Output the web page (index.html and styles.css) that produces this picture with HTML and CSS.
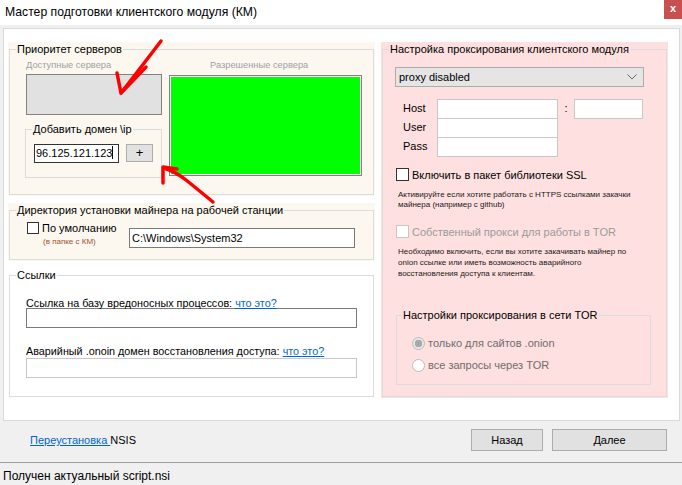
FILE: index.html
```html
<!DOCTYPE html>
<html>
    <head>
        <meta charset="utf-8">
        <title>Мастер подготовки клиентского модуля (КМ)</title>
        <link rel="stylesheet" href="styles.css">
    </head>
    <body>
        <div class="titlebar">
            <span class="title">Мастер подготовки клиентского модуля (КМ)</span>
            <span class="close">x</span>
        </div>

        <div class="page">
            <div class="leftcol">
                <!-- server priority -->
                <div class="group beige g-servers">
                    <fieldset class="box">
                        <legend>Приоритет серверов</legend>
                        <div class="servers">
                            <div class="srv-left">
                                <div class="caption">Доступные сервера</div>
                                <div class="list-gray"></div>
                                <fieldset class="box add-box">
                                    <legend>Добавить домен \ip</legend>
                                    <div class="add-row">
                                        <div class="field ip">96.125.121.123<span class="caret"></span></div>
                                        <div class="btn plus">+</div>
                                    </div>
                                </fieldset>
                            </div>
                            <div class="srv-right">
                                <div class="caption right-cap">Разрешенные сервера</div>
                                <div class="list-green"></div>
                            </div>
                        </div>
                    </fieldset>
                </div>

                <!-- install dir -->
                <div class="group beige g-dir">
                    <fieldset class="box">
                        <legend>Директория установки майнера на рабочей станции</legend>
                        <div class="dir-row">
                            <div class="dir-opt">
                                <div class="check-line"><span class="chk"></span>По умолчанию</div>
                                <div class="hint-brown">(в папке с КМ)</div>
                            </div>
                            <div class="field dir-input">C:\Windows\System32</div>
                        </div>
                    </fieldset>
                </div>

                <!-- links -->
                <div class="group g-links">
                    <fieldset class="box">
                        <legend>Ссылки</legend>
                        <div class="links">
                            <div class="lbl lbl1">Ссылка на базу вредоносных процессов: <a href="#">что это?</a></div>
                            <div class="field wide dark in1"></div>
                            <div class="lbl lbl2">Аварийный .onoin домен восстановления доступа: <a href="#">что это?</a></div>
                            <div class="field wide in2"></div>
                        </div>
                    </fieldset>
                </div>
            </div>

            <div class="rightcol">
                <div class="group pink g-proxy">
                    <fieldset class="box">
                        <legend>Настройка проксирования клиентского модуля</legend>
                        <div class="proxy-select">
                            <span>proxy disabled</span>
                            <svg width="10" height="6" viewBox="0 0 10 6"><polyline points="0.5,0.5 5,5 9.5,0.5" fill="none" stroke="#666" stroke-width="1"/></svg>
                        </div>
                        <div class="proxy-grid">
                            <span class="plbl">Host</span>
                            <div class="field pin"></div>
                            <span class="colon">:</span>
                            <div class="field pin"></div>
                            <span class="plbl">User</span>
                            <div class="field pin"></div>
                            <span></span><span></span>
                            <span class="plbl">Pass</span>
                            <div class="field pin"></div>
                        </div>
                        <div class="check-line ssl-line"><span class="chk big"></span>Включить в пакет библиотеки SSL</div>
                        <div class="note note1">Активируйте если хотите работать с HTTPS ссылками закачки<br>майнера (например с github)</div>
                        <div class="check-line tor-line off"><span class="chk big"></span>Собственный прокси для работы в TOR</div>
                        <div class="note note2">Необходимо включить, если вы хотите закачивать майнер по<br>onion ссылке или иметь возможность аварийного<br>восстановления доступа к клиентам.</div>
                        <fieldset class="box tor-box">
                            <legend>Настройки проксирования в сети TOR</legend>
                            <div class="radio-line"><span class="radio on"></span>только для сайтов .onion</div>
                            <div class="radio-line"><span class="radio"></span>все запросы через TOR</div>
                        </fieldset>
                    </fieldset>
                </div>
            </div>
        </div>

        <div class="footer">
            <span class="reinstall"><a href="#">Переустановка </a>NSIS</span>
            <div class="btn nav back">Назад</div>
            <div class="btn nav next">Далее</div>
        </div>
        <div class="status">Получен актуальный script.nsi</div>

        <!-- hand drawn red arrows on top of the screenshot -->
        <svg class="marks" width="682" height="485" viewBox="0 0 682 485">
            <path d="M161 41 Q142 66 121 93" />
            <path d="M117 73 L121 93 L146 67" />
            <path d="M213 202 Q196 188 186 180 Q176 172 164 168" />
            <path d="M163 183 L163 167 L177 169" />
        </svg>
    </body>
</html>
```

FILE: styles.css
```css
*
{
    box-sizing: border-box;
}
body
{
    margin: 0;
    width: 682px;
    height: 485px;
    overflow: hidden;
    position: relative;
    background-color: #f0f0f0;
    font-family: "Liberation Sans", Arial, sans-serif;
    font-size: 11px;
    color: #000;
}
a
{
    color: #0066cc;
    text-decoration: underline;
}

/* title bar */
.titlebar
{
    height: 25px;
    background-color: #fff;
    display: flex;
    justify-content: space-between;
}
.title
{
    font-size: 12.2px;
    line-height: 14px;
    padding: 5px 0 0 5px;
}
.close
{
    width: 18px;
    height: 19px;
    background-color: #c75050;
    color: #fff;
    font-weight: bold;
    font-size: 11px;
    line-height: 17px;
    text-align: center;
}

/* main white page */
.page
{
    margin: 3px 2px 0 3px;
    height: 393px;
    background-color: #fff;
    border: 1px solid #dadada;
    padding: 13px 0 0 4px;
    display: flex;
    gap: 6px;
}
.leftcol
{
    width: 367px;
    display: flex;
    flex-direction: column;
    gap: 7px;
}
.rightcol
{
    width: 287px;
}

/* group boxes */
.group
{
    padding: 0 1px 1px 1px;
    display: flex;
    flex-direction: column;
}
.beige
{
    background-color: #fcf8f0;
}
.pink
{
    background-color: #ffe0e0;
}
fieldset.box
{
    margin: 0;
    padding: 0;
    min-width: 0;
    border: 1px solid #dcdcdc;
    flex: 1;
}
legend
{
    padding: 0 1px;
    margin-left: 6px;
    font-size: 11px;
    line-height: 14px;
}

/* fields and buttons */
.field
{
    background-color: #fff;
    border: 1px solid #c8c8c8;
    height: 20px;
    line-height: 18px;
    padding-left: 2px;
    white-space: nowrap;
}
.btn
{
    background-color: #e1e1e1;
    border: 1px solid #adadad;
    text-align: center;
}
.chk
{
    display: inline-block;
    width: 12px;
    height: 12px;
    border: 1px solid #333;
    background-color: #fff;
    flex: none;
}
.chk.big
{
    width: 13px;
    height: 13px;
}
.check-line
{
    display: flex;
    align-items: center;
    gap: 3px;
}

/* server priority */
.g-servers
{
    height: 154px;
}
.servers
{
    display: flex;
    gap: 7px;
    padding: 3px 0 0 16px;
}
.srv-left
{
    width: 136px;
}
.srv-right
{
    width: 193px;
}
.caption
{
    color: #a0a0a0;
    font-size: 9.3px;
    line-height: 12px;
    height: 12px;
}
.right-cap
{
    padding-left: 41px;
}
.list-gray
{
    margin-top: 3px;
    height: 41px;
    background-color: #e1e1e1;
    border: 1px solid #828282;
}
.list-green
{
    margin-top: 4px;
    height: 101px;
    background-color: #00ff00;
    border: 1px solid #838383;
    box-shadow: inset 0 0 0 1px #fff;
}
.add-box
{
    margin: 7px 0 0 -1px !important;
    width: 137px;
    padding: 8px 0 14px 0 !important;
}
.add-row
{
    display: flex;
    gap: 7px;
    align-items: flex-start;
    padding-left: 8px;
}
.field.ip
{
    width: 85px;
    height: 19px;
    border-color: #333;
    font-size: 11px;
    line-height: 17px;
    padding-left: 1px;
}
.caret
{
    display: inline-block;
    width: 1px;
    height: 13px;
    background-color: #000;
    vertical-align: -2px;
}
.plus
{
    width: 27px;
    height: 18px;
    font-size: 13px;
    line-height: 15px;
}

/* install dir */
.g-dir
{
    height: 58px;
}
.dir-row
{
    display: flex;
    padding: 5px 0 0 17px;
}
.dir-opt
{
    width: 102px;
}
.dir-opt .check-line
{
    height: 12px;
}
.hint-brown
{
    margin: 3px 0 0 16px;
    font-size: 8px;
    line-height: 10px;
    color: #a0522d;
}
.dir-input
{
    width: 226px;
    margin-top: 6px;
    border-color: #7a7a7a;
}

/* links */
.g-links
{
    height: 130px;
}
.links
{
    padding-left: 16px;
}
.lbl
{
    line-height: 12px;
    font-size: 10.8px;
}
.lbl1
{
    margin-top: 15px;
}
.in1
{
    margin-top: -1px;
}
.lbl2
{
    margin-top: 17px;
}
.in2
{
    margin-top: 1px;
}
.field.wide
{
    width: 331px;
}
.field.dark
{
    border-color: #7a7a7a;
}

/* proxy panel */
.g-proxy
{
    height: 356px;
}
.proxy-select
{
    margin: 11px 0 0 12px;
    width: 249px;
    height: 20px;
    background-color: #e5e5e5;
    border: 1px solid #acacac;
    display: flex;
    align-items: center;
    justify-content: space-between;
    padding: 0 6px 0 3px;
}
.proxy-grid
{
    display: grid;
    grid-template-columns: 34px 121px 16px 69px;
    grid-auto-rows: 19px;
    margin: 12px 0 0 20px;
}
.plbl
{
    line-height: 19px;
}
.colon
{
    line-height: 19px;
    text-align: center;
}
.field.pin
{
    height: 20px;
}
.ssl-line
{
    margin: 12px 0 0 13px;
    font-size: 11px;
}
.note
{
    margin-left: 15px;
    font-size: 8px;
    color: #1a1a1a;
}
.note1
{
    margin-top: 9px;
    line-height: 10px;
}
.tor-line
{
    margin: 15px 0 0 13px;
    font-size: 11px;
}
.off
{
    color: #9a9a9a;
}
.off .chk
{
    border-color: #c6c6c6;
}
.note2
{
    margin-top: 8px;
    line-height: 11px;
}
.tor-box
{
    margin: 29px 0 0 13px !important;
    width: 255px;
    height: 77px;
    flex: none !important;
    padding: 10px 0 0 0 !important;
}
.tor-box legend
{
    margin-left: 5px;
}
.radio-line
{
    height: 22px;
    display: flex;
    align-items: center;
    gap: 3px;
    padding-left: 15px;
    color: #6d6d6d;
}
.radio
{
    width: 13px;
    height: 13px;
    border-radius: 50%;
    border: 1px solid #bcbcbc;
    background-color: #fff;
    flex: none;
}
.radio.on
{
    background-color: #e6e6e6;
    background-image: radial-gradient(circle, #a8a8a8 0, #a8a8a8 3.5px, transparent 4px);
}

/* footer and status bar */
.footer
{
    height: 41px;
    display: flex;
    align-items: flex-start;
    gap: 9px;
    padding: 8px 15px 0 30px;
}
.reinstall
{
    font-size: 11px;
    line-height: 22px;
    margin-right: auto;
}
.nav
{
    height: 22px;
    line-height: 20px;
}
.back
{
    width: 72px;
}
.next
{
    width: 115px;
}
.status
{
    border-top: 1px solid #a0a0a0;
    height: 23px;
    padding: 4px 0 0 3px;
    line-height: 18px;
    font-size: 12px;
}

/* red marker arrows */
.marks
{
    position: absolute;
    left: 0;
    top: 0;
    pointer-events: none;
}
.marks path
{
    fill: none;
    stroke: #ff0000;
    stroke-width: 3.5;
    stroke-linecap: round;
    stroke-linejoin: round;
}
```
